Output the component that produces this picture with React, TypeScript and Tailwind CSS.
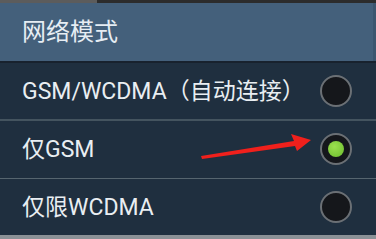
import React from "react";

const font = { fontFamily: 'Roboto, "Noto Sans CJK SC", sans-serif' };

function Radio({ checked }: { checked?: boolean }) {
  return (
    <div className="w-[32px] h-[32px] rounded-full border-2 border-[#6b7075] bg-[#15171b] flex items-center justify-center">
      {checked && (
        <div className="w-[16px] h-[16px] rounded-full bg-[radial-gradient(circle_at_40%_35%,#9be04f,#6cbd2c)]" />
      )}
    </div>
  );
}

function Row({ label, checked }: { label: string; checked?: boolean }) {
  return (
    <div className="h-[56px] flex items-center justify-between pl-[22px] pr-[24px]">
      <span className="text-[23px] text-[#e9eef2] leading-none">{label}</span>
      <Radio checked={checked} />
    </div>
  );
}

export default function App() {
  return (
    <div className="w-[376px] h-[239px] bg-[#1f2f3f] flex flex-col relative overflow-hidden" style={font}>
      <div className="h-[3px] flex">
        <div className="w-[97px] bg-[#5c5c5c]" />
        <div className="flex-1 bg-[#2c2c2c]" />
      </div>
      <div className="h-[58px] bg-[#44607b] flex items-center pl-[22px] border-r-[3px] border-[#3c566f]">
        <span className="text-[24px] text-[#e6edf3] leading-none">网络模式</span>
      </div>
      <div className="h-[2px] bg-[#18222e]" />
      <Row label="GSM/WCDMA（自动连接）" />
      <div className="h-[2px] bg-[#44545f]" />
      <Row label="仅GSM" checked />
      <div className="h-[1px] bg-[#56656f] mt-px" />
      <Row label="仅限WCDMA" />
      <div className="flex-1 bg-[#8b9196]" />
      <svg className="absolute left-0 top-0" width="376" height="239" viewBox="0 0 376 239">
        <polygon
          points="201,156 294,141 291,134 311,140 297,151 295,146 202,159"
          fill="#f0201c"
        />
      </svg>
    </div>
  );
}
